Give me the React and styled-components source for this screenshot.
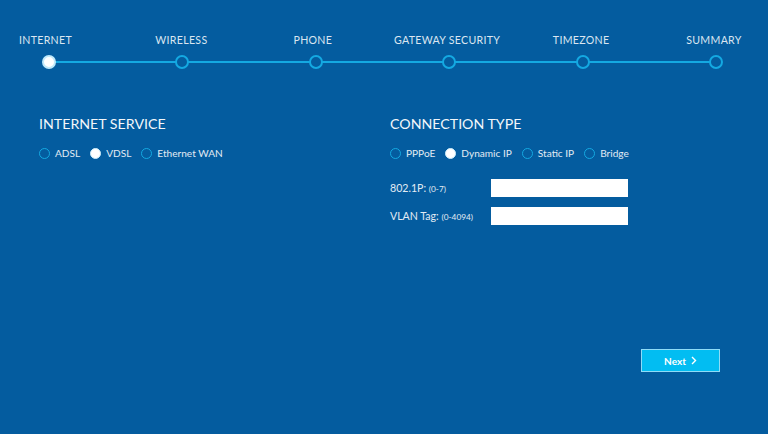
import React from "react";
import styled, { createGlobalStyle } from "styled-components";

const Global = createGlobalStyle`
  html, body { margin: 0; padding: 0; background: #045c9f; }
  body { font-family: Lato, "Open Sans", sans-serif; }
  * { box-sizing: border-box; }
`;

const Page = styled.div`
  width: 768px;
  height: 434px;
  background: #045c9f;
  display: flex;
  flex-direction: column;
  color: #e6eef6;
  overflow: hidden;
`;

const Stepper = styled.div`
  position: relative;
  display: flex;
  justify-content: space-between;
  margin: 34px 52px 0 49px;
  &::before {
    content: "";
    position: absolute;
    left: 0;
    right: 0;
    top: 27px;
    height: 2px;
    background: #14a9e2;
  }
`;

const Step = styled.div`
  width: 0;
  display: flex;
  flex-direction: column;
  align-items: center;
  gap: 8px;
  position: relative;
`;

const StepLabel = styled.div`
  font-size: 10.6px;
  line-height: 13px;
  letter-spacing: 0.3px;
  white-space: nowrap;
  color: #dbe6f1;
  margin-left: ${(p) => p.$shift || 0}px;
`;

const Dot = styled.div`
  width: 14px;
  height: 14px;
  border-radius: 50%;
  border: 2px solid ${(p) => (p.$active ? "#bfe9fb" : "#14a9e2")};
  background: ${(p) => (p.$active ? "#ffffff" : "#045c9f")};
  flex: none;
`;

const Main = styled.div`
  display: grid;
  grid-template-columns: 351px 1fr;
  padding: 46px 0 0 39px;
`;

const Section = styled.div`
  display: flex;
  flex-direction: column;
`;

const Heading = styled.h2`
  margin: 0;
  font-weight: 400;
  font-size: 14.2px;
  line-height: 18px;
  color: #f2f6fa;
`;

const RadioRow = styled.div`
  display: flex;
  align-items: center;
  gap: 10px;
  margin-top: 13px;
  height: 14px;
`;

const RadioItem = styled.label`
  display: flex;
  align-items: center;
  gap: 5px;
  font-size: 10.1px;
  color: #e2ebf4;
`;

const RadioCircle = styled.span`
  width: 11px;
  height: 11px;
  border-radius: 50%;
  border: 1.5px solid ${(p) => (p.$checked ? "#cdeefc" : "#14a9e2")};
  background: ${(p) => (p.$checked ? "#ffffff" : "transparent")};
  flex: none;
`;

const Form = styled.div`
  display: flex;
  flex-direction: column;
  gap: 10px;
  margin-top: 19px;
`;

const FieldRow = styled.div`
  display: flex;
  align-items: center;
`;

const FieldLabel = styled.div`
  width: 101px;
  font-size: 10.6px;
  color: #e2ebf4;
  small {
    font-size: 8.3px;
  }
`;

const Input = styled.div`
  width: 137px;
  height: 18px;
  background: #ffffff;
`;

const Footer = styled.div`
  margin-top: auto;
  display: flex;
  justify-content: flex-end;
  padding: 0 48px 62px 0;
`;

const NextButton = styled.button`
  width: 79px;
  height: 23px;
  background: #02bdf2;
  border: 1px solid #8fdcf7;
  color: #ffffff;
  font-family: Lato, "Open Sans", sans-serif;
  font-weight: 700;
  font-size: 10px;
  display: flex;
  align-items: center;
  justify-content: center;
  gap: 5px;
  padding: 0;
`;

const steps = [
  { label: "INTERNET", shift: -7, active: true },
  { label: "WIRELESS", shift: -2 },
  { label: "PHONE", shift: -6 },
  { label: "GATEWAY SECURITY", shift: -4 },
  { label: "TIMEZONE", shift: -3 },
  { label: "SUMMARY", shift: -4 },
];

function Radio({ label, checked }) {
  return (
    <RadioItem>
      <RadioCircle $checked={checked} />
      {label}
    </RadioItem>
  );
}

export default function App() {
  return (
    <Page>
      <Global />
      <Stepper>
        {steps.map((s) => (
          <Step key={s.label}>
            <StepLabel $shift={s.shift}>{s.label}</StepLabel>
            <Dot $active={s.active} />
          </Step>
        ))}
      </Stepper>
      <Main>
        <Section>
          <Heading>INTERNET SERVICE</Heading>
          <RadioRow>
            <Radio label="ADSL" />
            <Radio label="VDSL" checked />
            <Radio label="Ethernet WAN" />
          </RadioRow>
        </Section>
        <Section>
          <Heading>CONNECTION TYPE</Heading>
          <RadioRow>
            <Radio label="PPPoE" />
            <Radio label="Dynamic IP" checked />
            <Radio label="Static IP" />
            <Radio label="Bridge" />
          </RadioRow>
          <Form>
            <FieldRow>
              <FieldLabel>
                802.1P: <small>(0-7)</small>
              </FieldLabel>
              <Input />
            </FieldRow>
            <FieldRow>
              <FieldLabel>
                VLAN Tag: <small>(0-4094)</small>
              </FieldLabel>
              <Input />
            </FieldRow>
          </Form>
        </Section>
      </Main>
      <Footer>
        <NextButton>
          Next
          <svg width="6" height="9" viewBox="0 0 6 9">
            <path d="M1 1 L4.5 4.5 L1 8" stroke="#fff" strokeWidth="1.4" fill="none" />
          </svg>
        </NextButton>
      </Footer>
    </Page>
  );
}
